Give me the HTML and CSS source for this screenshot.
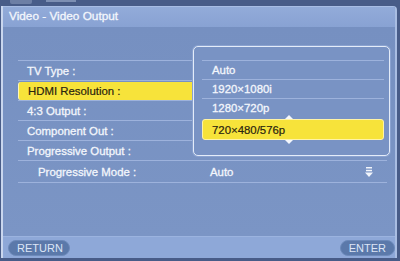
FILE: index.html
```html
<!DOCTYPE html>
<html lang="en">
<head>
    <meta charset="UTF-8">
    <meta name="viewport" content="width=device-width, initial-scale=1.0">
    <title>Video - Video Output</title>
    <link rel="stylesheet" href="styles.css">
</head>
<body>
    <div class="top-strip">
        <span class="tab"></span>
        <span class="tab-mark"></span>
    </div>
    <div class="window">
        <div class="title-bar">Video - Video Output</div>
        <div class="content">
            <div class="settings">
                <div class="row">TV Type :</div>
                <div class="row active"><span class="highlight">HDMI Resolution :</span></div>
                <div class="row">4:3 Output :</div>
                <div class="row">Component Out :</div>
                <div class="row">Progressive Output :</div>
                <div class="row sub">
                    <span class="label">Progressive Mode :</span>
                    <span class="value">Auto</span>
                    <svg class="arrow" width="8" height="10" viewBox="0 0 8 10">
                        <rect x="1" y="0" width="6" height="1.5" fill="#f2f5fb"/>
                        <rect x="1" y="2.8" width="6" height="1.5" fill="#f2f5fb"/>
                        <polygon points="0,5.6 8,5.6 4,10" fill="#f2f5fb"/>
                    </svg>
                </div>
            </div>

            <div class="popup">
                <div class="option">Auto</div>
                <div class="option">1920×1080i</div>
                <div class="option">1280×720p</div>
                <div class="option selected">
                    <span class="caret caret-up"></span>
                    720×480/576p
                    <span class="caret caret-down"></span>
                </div>
            </div>
        </div>
        <div class="footer">
            <span class="pill">RETURN</span>
            <span class="pill">ENTER</span>
        </div>
    </div>
</body>
</html>
```

FILE: styles.css
```css
body {
    margin: 0;
    width: 400px;
    height: 261px;
    overflow: hidden;
    background-color: #485c88;
    font-family: 'Liberation Sans', Arial, sans-serif;
    color: #f3f6fc;
}

.top-strip {
    height: 6px;
    position: relative;
    overflow: hidden;
}

.tab {
    position: absolute;
    left: 10px;
    top: -4px;
    width: 22px;
    height: 8px;
    background-color: #6d7fa5;
    border-radius: 2px;
}

.tab-mark {
    position: absolute;
    left: 46px;
    top: 0;
    width: 30px;
    height: 2px;
    background-color: #7d8fb3;
}

.window {
    margin-left: 1px;
    width: 392px;
    height: 252px;
    display: flex;
    flex-direction: column;
    background-color: #7891c2;
    border-left: 2px solid #c9d6ee;
    border-right: 2px solid #a9bde2;
    border-top-right-radius: 4px;
    overflow: hidden;
}

.title-bar {
    height: 20px;
    padding-left: 6px;
    font-size: 11.8px;
    line-height: 19px;
    background: linear-gradient(#92abd9, #88a2d3);
    border-top: 1px solid #a8bde4;
    -webkit-text-stroke: 0.3px #f3f6fc;
}

.content {
    flex: 1;
    position: relative;
    padding-top: 33px;
    background: linear-gradient(#7690c1, #7b95c5);
}

.settings {
    margin-left: 15px;
    margin-right: 8px;
    border-top: 1px solid #9db2dc;
}

.row {
    height: 19px;
    display: flex;
    align-items: center;
    padding-left: 9px;
    font-size: 11.4px;
    border-bottom: 1px solid #9db2dc;
    -webkit-text-stroke: 0.3px #f3f6fc;
}

.row.active {
    padding-left: 0;
}

.highlight {
    flex: 1;
    height: 18px;
    margin-top: 1px;
    display: flex;
    align-items: center;
    padding-left: 9px;
    background-color: #f7e33a;
    color: #2a2410;
    -webkit-text-stroke: 0.2px #2a2410;
    border-left: 1px solid #fff6b8;
    border-radius: 3px 0 0 3px;
}

.row.sub {
    height: 21px;
    padding-left: 20px;
}

.label {
    width: 172px;
}

.value {
    flex: 1;
}

.arrow {
    margin-right: 14px;
}

.popup {
    position: absolute;
    left: 190px;
    top: 19px;
    width: 197px;
    height: 110px;
    padding: 13px 0 0 8px;
    box-sizing: border-box;
    background-color: #7993c4;
    border: 1px solid #e4ecf9;
    border-radius: 5px;
    box-shadow: 0 0 0 1px #8aa2d0;
}

.option {
    width: 182px;
    height: 19px;
    display: flex;
    align-items: center;
    padding-left: 10px;
    box-sizing: border-box;
    font-size: 11.4px;
    border-top: 1px solid #9db2dc;
    -webkit-text-stroke: 0.3px #f3f6fc;
}

.option.selected {
    position: relative;
    height: 21px;
    margin-top: 2px;
    padding-left: 9px;
    background-color: #f7e33a;
    color: #2a2410;
    -webkit-text-stroke: 0.2px #2a2410;
    border: 1px solid #fff3a6;
    border-radius: 3px;
}

.caret {
    position: absolute;
    left: 82px;
    width: 0;
    height: 0;
    border-left: 4px solid transparent;
    border-right: 4px solid transparent;
}

.caret-up {
    top: -5px;
    border-bottom: 4px solid #f4f7fc;
}

.caret-down {
    bottom: -5px;
    border-top: 4px solid #f4f7fc;
}

.footer {
    height: 21px;
    display: flex;
    align-items: flex-end;
    justify-content: space-between;
    padding: 0 0 2px 5px;
    box-sizing: border-box;
    height: 22px;
    background-color: #8ea8d8;
    border-top: 1px solid #9bb3df;
}

.pill {
    height: 14px;
    padding: 0 8px;
    display: flex;
    align-items: center;
    font-size: 11px;
    color: #dde6f6;
    background-color: #5b79aa;
    border: 1px solid #6d8aba;
    border-radius: 8px;
}

.pill:first-child {
    width: 44px;
}
```
